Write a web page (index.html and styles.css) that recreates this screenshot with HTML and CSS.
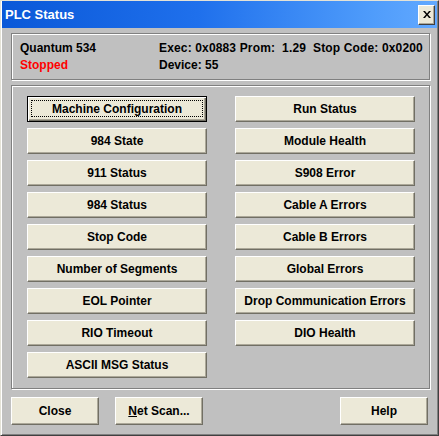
FILE: index.html
```html
<!DOCTYPE html>
<html lang="en">
<head>
<meta charset="UTF-8"/>
<title>PLC Status</title>
<link rel="stylesheet" href="styles.css">
</head>
<body>

<div class="window">
  <div class="titlebar">
    <span class="title">PLC Status</span>
    <button class="closeBtn" title="Close">
      <svg width="8" height="7" viewBox="0 0 8 7"><path d="M0 0h2l2 2.5L6 0h2L5 3.5 8 7H6L4 4.5 2 7H0l3-3.5z" fill="#000"/></svg>
    </button>
  </div>

  <div class="group info">
    <span>Quantum 534</span>
    <span class="pre">Exec: 0x0883 Prom:  1.29  Stop Code: 0x0200</span>
    <span class="stopped">Stopped</span>
    <span>Device: 55</span>
  </div>

  <div class="group actions">
    <button class="btn default">Machine Configuration</button>
    <button class="btn">Run Status</button>
    <button class="btn">984 State</button>
    <button class="btn">Module Health</button>
    <button class="btn">911 Status</button>
    <button class="btn">S908 Error</button>
    <button class="btn">984 Status</button>
    <button class="btn">Cable A Errors</button>
    <button class="btn">Stop Code</button>
    <button class="btn">Cable B Errors</button>
    <button class="btn">Number of Segments</button>
    <button class="btn">Global Errors</button>
    <button class="btn">EOL Pointer</button>
    <button class="btn">Drop Communication Errors</button>
    <button class="btn">RIO Timeout</button>
    <button class="btn">DIO Health</button>
    <button class="btn">ASCII MSG Status</button>
  </div>

  <div class="footer">
    <button class="btn small">Close</button>
    <button class="btn small"><u>N</u>et Scan...</button>
    <button class="btn small help">Help</button>
  </div>
</div>

</body>
</html>
```

FILE: styles.css
```css
body { margin:0; font-family:"Liberation Sans",Arial,sans-serif; font-size:12px; font-weight:bold; }
.window { width:439px; height:436px; box-sizing:border-box; background:#c0c0c0; padding:0 1px 2px 1px; border:1px solid; border-color:#e4e2d6 #404040 #404040 #e4e2d6; box-shadow:inset 1px 0 #fff, inset -1px -1px #808080; display:flex; flex-direction:column; }
.titlebar { height:27px; flex:none; display:flex; align-items:center; justify-content:space-between; padding:0 2px 0 3px; background:linear-gradient(to right,#0a58d8 0%,#1f70ec 45%,#4f9cfb 85%,#62a9ff 100%); }
.title { color:#fff; font-size:13px; }
.closeBtn { width:17px; height:20px; padding:0; display:flex; align-items:center; justify-content:center; background:#ece9d8; border:1px solid; border-color:#fff #404040 #404040 #fff; box-shadow:inset -1px -1px #aca899; }
.group { flex:none; border:1px solid #808080; box-shadow:inset 1px 1px #fff, 1px 1px #fff; margin:0 7px 0 9px; }
.info { margin-top:5px; height:34px; padding:5px 8px 6px 8px; display:grid; grid-template-columns:139px auto; grid-auto-rows:17px; align-items:center; }
.pre { white-space:pre; letter-spacing:0.15px; }
.stopped { color:#f00; }
.actions { margin-top:5px; height:304px; box-sizing:border-box; padding:10px 14px 0 15px; display:grid; grid-template-columns:180px 180px; grid-auto-rows:26px; column-gap:28px; row-gap:6px; align-content:start; }
.btn { position:relative; font-family:inherit; font-size:12px; font-weight:bold; color:#000; background:#ece9d8; padding:0; border:1px solid; border-color:#fff #716f64 #716f64 #fff; box-shadow:inset -1px -1px #aca899; cursor:pointer; }
.default { border-color:#000; box-shadow:inset 1px 1px #fff, inset -1px -1px #716f64, inset -2px -2px #aca899; }
.default::after { content:""; position:absolute; left:3px; top:3px; right:3px; bottom:4px; border:1px dotted #000; }
.footer { flex:none; display:flex; gap:16px; margin:8px 9px 0 9px; }
.small { width:88px; height:28px; }
.help { margin-left:auto; }
```
